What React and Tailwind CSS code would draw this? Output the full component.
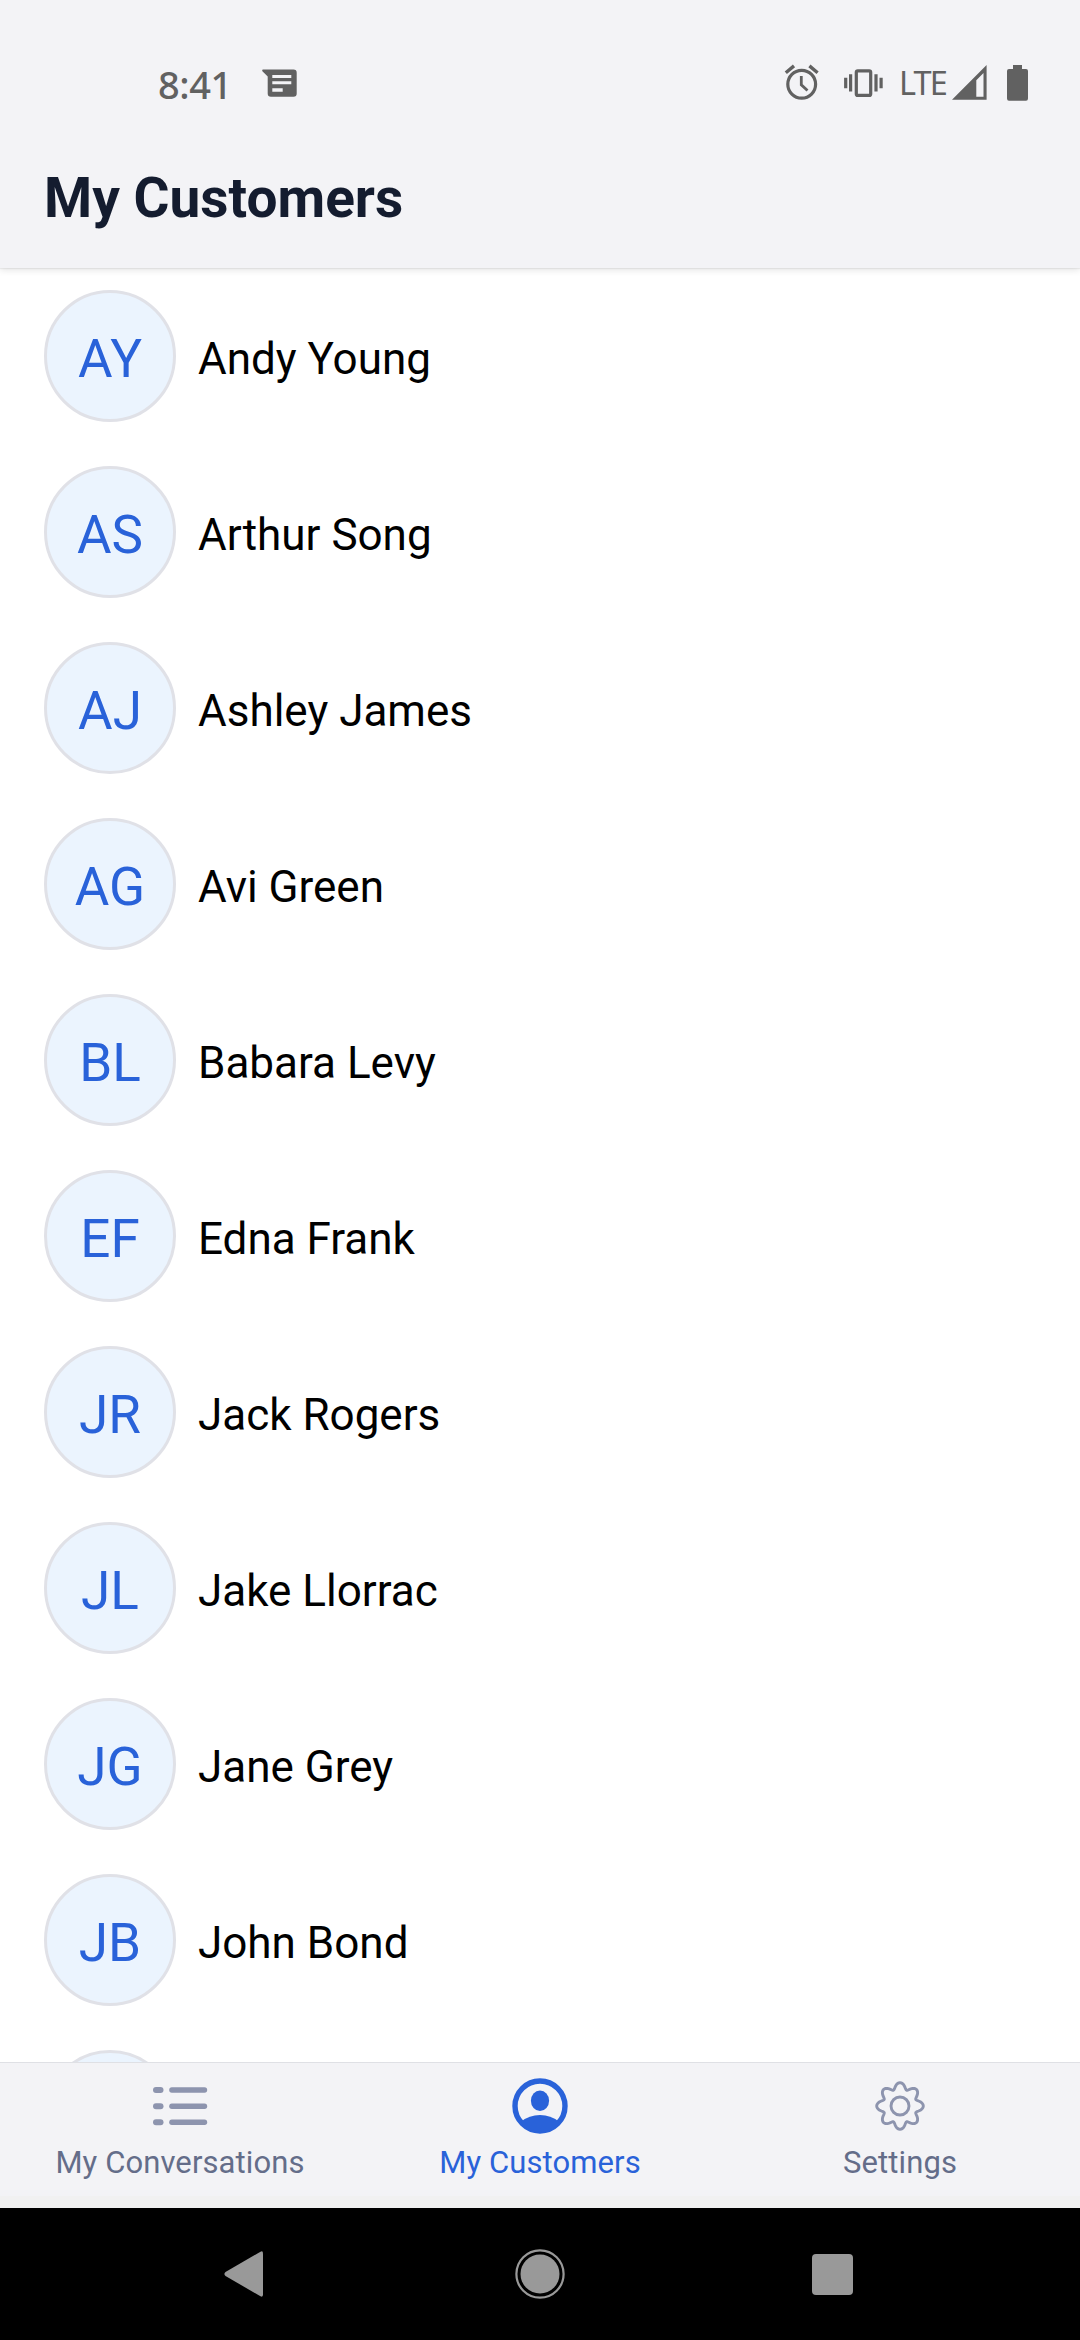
const customers = [
  ["AY", "Andy Young"],
  ["AS", "Arthur Song"],
  ["AJ", "Ashley James"],
  ["AG", "Avi Green"],
  ["BL", "Babara Levy"],
  ["EF", "Edna Frank"],
  ["JR", "Jack Rogers"],
  ["JL", "Jake Llorrac"],
  ["JG", "Jane Grey"],
  ["JB", "John Bond"],
  ["", ""],
];

// Eight-toothed gear outline, centred on the origin
const gearPath =
  Array.from({ length: 160 }, (_, i) => {
    const a = (i / 160) * Math.PI * 2;
    const r = 20.2 + 3.1 * Math.cos(8 * a);
    const t = a + 0.03 * Math.sin(8 * a);
    return `${i ? "L" : "M"}${(r * Math.cos(t)).toFixed(2)} ${(r * Math.sin(t)).toFixed(2)}`;
  }).join("") + "Z";

function StatusBar() {
  return (
    <div className="flex h-[130px] items-start pl-[158px] text-[#616161]">
      <span className="mt-[58px] w-[72px] whitespace-nowrap font-['Noto_Sans'] text-[38px] leading-[52px] font-medium tracking-[-0.4px]">8:41</span>
      <svg className="mt-[69px] ml-[32px] h-[28px] w-[35px]" viewBox="0 0 35 28" fill="currentColor">
        <path fillRule="evenodd" d="M1 .5H31.500Q34.700.500 34.700 3.700V24.500Q34.700 27.700 31.500 27.700H9Q5.700 27.700 5.700 24.500V7.500L.4 2.200Q-.2.500 1 .5ZM10.300 6V9H29.300V6ZM10.300 12.200V15.300H29.300V12.200ZM10.300 19.300V22.700H20.700V19.300Z" />
      </svg>
      <svg className="mt-[64px] ml-[487px] h-[37px] w-[36px]" viewBox="0 0 36 37" fill="none" stroke="currentColor">
        <circle cx="17.700" cy="20.300" r="13.900" strokeWidth="3.200" />
        <path d="M1.800 8.700 10 1.900M25.400 1.900 33.600 8.700" strokeWidth="3.400" />
        <path d="M17.300 12V20.800L23.500 26.500" strokeWidth="2.800" />
      </svg>
      <svg className="mt-[69px] ml-[24px] h-[29px] w-[39px]" viewBox="0 0 39 29" fill="none" stroke="currentColor">
        <rect x="12.300" y="1.800" width="14.400" height="24.600" rx="1.500" strokeWidth="3.200" />
        <path d="M1.700 8.700V19.300M37.100 8.700V19.300M6.600 5.300V22.500M32 5.300V22.500" strokeWidth="3.200" />
      </svg>
      <span className="mt-[60px] ml-[16px] w-[50px] whitespace-nowrap font-['Noto_Sans'] text-[32.5px] leading-[46px] font-normal tracking-[-1.8px]">LTE</span>
      <svg className="mt-[65px] ml-[3px] h-[35px] w-[35px]" viewBox="0 0 35 35" fill="currentColor">
        <path fillRule="evenodd" d="M34.600 0V34.700H0ZM31.500 8 24.300 15.200V31.700H31.500Z" />
      </svg>
      <svg className="mt-[65px] ml-[20px] h-[36px] w-[21px]" viewBox="0 0 21 36" fill="currentColor">
        <path d="M6 0H15V4H19Q21 4 21 6V33.500Q21 35.700 19 35.700H2Q0 35.700 0 33.500V6Q0 4 2 4H6Z" />
      </svg>
    </div>
  );
}

function Customer({ initials, name }) {
  return (
    <li className="flex h-[176px] shrink-0 items-start pl-[44px]">
      <div className="flex h-[132px] w-[132px] shrink-0 items-center justify-center rounded-full border-[3px] border-[#e0e1e7] bg-[#ebf4fe] pt-[5px] text-[53px] leading-[62px] text-[#2962d9]">
        {initials}
      </div>
      <span className="ml-[22px] mt-[43px] whitespace-nowrap text-[44px] leading-[52px] text-black">{name}</span>
    </li>
  );
}

function Tab({ label, active, children }) {
  return (
    <div className={active ? "flex w-[360px] flex-col items-center text-[#2962d9]" : "flex w-[360px] flex-col items-center text-[#646d89]"}>
      <svg className="mt-[13px] h-[60px] w-[60px]" viewBox="-30 -30 60 60">{children}</svg>
      <span className="mt-[9px] whitespace-nowrap text-[31px] leading-[36px] tracking-[0.1px]">{label}</span>
    </div>
  );
}

export default function App() {
  return (
    <div className="flex h-[2340px] w-[1080px] flex-col overflow-hidden bg-white font-[Roboto,sans-serif]">
      <header className="relative z-10 h-[268px] shrink-0 bg-[#f3f3f6] shadow-[0_1px_1px_rgba(0,0,0,0.05),0_2px_7px_rgba(0,0,0,0.11)]">
        <StatusBar />
        <h1 className="mt-[35px] pl-[44px] text-[55px] leading-[66px] font-bold text-[#141c2f]">My Customers</h1>
      </header>
      <ul className="flex h-[1794px] shrink-0 flex-col overflow-hidden pt-[22px]">
        {customers.map(([initials, name], i) => (
          <Customer key={i} initials={initials} name={name} />
        ))}
      </ul>
      <nav className="flex h-[134px] shrink-0 border-t border-[#dfe0e5] bg-[#f3f3f6]">
        <Tab label="My Conversations">
          <g fill="#8d94ae">
            {[-16, 0.200, 16.300].map((y) => (
              <g key={y}>
                <rect x="-27" y={y - 3} width="10.500" height="6" rx="3" />
                <rect x="-10.800" y={y - 2.700} width="38" height="5.400" rx="2.700" />
              </g>
            ))}
          </g>
        </Tab>
        <Tab label="My Customers" active>
          <circle r="25" fill="none" stroke="currentColor" strokeWidth="5.400" />
          <ellipse cy="-5.200" rx="9.100" ry="10.200" fill="currentColor" />
          <path d="M-18.500 15.500Q-11 9 0 9T18.500 15.500L17 20Q9 26 0 26T-17 20Z" fill="currentColor" />
        </Tab>
        <Tab label="Settings">
          <g fill="none" stroke="#8d94ae" strokeWidth="2.900">
            <path d={gearPath} strokeLinejoin="round" />
            <circle r="9" />
          </g>
        </Tab>
      </nav>
      <div className="h-[12px] shrink-0 bg-[#f1f1f1]" />
      <div className="flex h-[132px] shrink-0 items-center bg-black pl-[224px] text-[#999999]">
        <svg className="h-[46px] w-[39px]" viewBox="0 0 39 46" fill="currentColor">
          <path d="M36.500.700Q39-.500 39 2.500V43.500Q39 46.500 36.500 45.300L1.500 25Q-.700 23 1.500 21Z" />
        </svg>
        <svg className="ml-[252px] h-[50px] w-[50px]" viewBox="0 0 50 50" fill="currentColor">
          <circle cx="25" cy="25" r="23.600" fill="none" stroke="currentColor" strokeWidth="2.200" />
          <circle cx="25" cy="25" r="19.500" />
        </svg>
        <div className="ml-[247px] h-[41px] w-[41px] rounded-[4px] bg-[#999999]" />
      </div>
    </div>
  );
}
